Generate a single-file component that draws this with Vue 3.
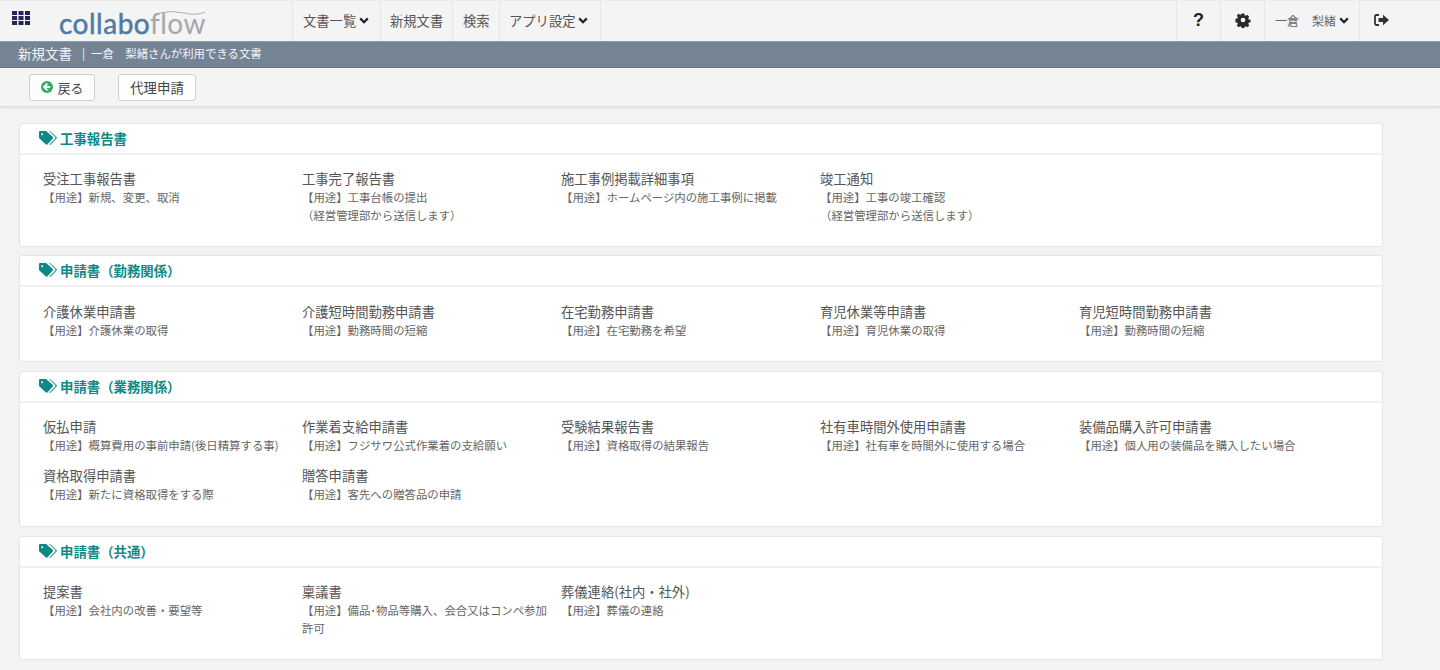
<script setup>
const sections = [
  { title: '工事報告書', height: 'h124', items: [
    { t: '受注工事報告書', d: ['【用途】新規、変更、取消'] },
    { t: '工事完了報告書', d: ['【用途】工事台帳の提出', '（経営管理部から送信します）'] },
    { t: '施工事例掲載詳細事項', d: ['【用途】ホームページ内の施工事例に掲載'] },
    { t: '竣工通知', d: ['【用途】工事の竣工確認', '（経営管理部から送信します）'] },
  ] },
  { title: '申請書（勤務関係）', height: 'h107', items: [
    { t: '介護休業申請書', d: ['【用途】介護休業の取得'] },
    { t: '介護短時間勤務申請書', d: ['【用途】勤務時間の短縮'] },
    { t: '在宅勤務申請書', d: ['【用途】在宅勤務を希望'] },
    { t: '育児休業等申請書', d: ['【用途】育児休業の取得'] },
    { t: '育児短時間勤務申請書', d: ['【用途】勤務時間の短縮'] },
  ] },
  { title: '申請書（業務関係）', height: 'h156', items: [
    { t: '仮払申請', d: ['【用途】概算費用の事前申請(後日精算する事)'] },
    { t: '作業着支給申請書', d: ['【用途】フジサワ公式作業着の支給願い'] },
    { t: '受験結果報告書', d: ['【用途】資格取得の結果報告'] },
    { t: '社有車時間外使用申請書', d: ['【用途】社有車を時間外に使用する場合'] },
    { t: '装備品購入許可申請書', d: ['【用途】個人用の装備品を購入したい場合'] },
    { t: '資格取得申請書', d: ['【用途】新たに資格取得をする際'] },
    { t: '贈答申請書', d: ['【用途】客先への贈答品の申請'] },
  ] },
  { title: '申請書（共通）', height: 'h124', items: [
    { t: '提案書', d: ['【用途】会社内の改善・要望等'] },
    { t: '稟議書', d: ['【用途】備品･物品等購入、会合又はコンペ参加', '許可'] },
    { t: '葬儀連絡(社内・社外)', d: ['【用途】葬儀の連絡'] },
  ] },
]
</script>

<template>
  <div class="page">
    <header class="topbar">
      <div class="brand">
        <svg class="apps" width="18" height="14" viewBox="0 0 18 14">
          <g fill="#23235f">
            <rect x="0" y="0" width="5" height="4" /><rect x="6.500" y="0" width="5" height="4" /><rect x="13" y="0" width="5" height="4" />
            <rect x="0" y="5" width="5" height="4" /><rect x="6.500" y="5" width="5" height="4" /><rect x="13" y="5" width="5" height="4" />
            <rect x="0" y="10" width="5" height="4" /><rect x="6.500" y="10" width="5" height="4" /><rect x="13" y="10" width="5" height="4" />
          </g>
        </svg>
        <div class="logo">
          <span class="logo-a">collabo</span><span class="logo-b">flow</span>
          <svg class="swoosh" width="48" height="6" viewBox="0 0 48 6"><path d="M1 3 Q14 0 26 3 T47 2" fill="none" stroke="#aab0b3" stroke-width="1" /></svg>
        </div>
      </div>
      <nav class="nav">
        <a class="nav-item w88">文書一覧<svg class="chev" viewBox="0 0 10 7"><path d="M1.200 1.400 5 5.200 8.800 1.400" /></svg></a>
        <a class="nav-item w72">新規文書</a>
        <a class="nav-item w47">検索</a>
        <a class="nav-item w101">アプリ設定<svg class="chev" viewBox="0 0 10 7"><path d="M1.200 1.400 5 5.200 8.800 1.400" /></svg></a>
      </nav>
      <div class="right">
        <a class="r-item help">?</a>
        <a class="r-item gear">
          <svg width="16" height="16" viewBox="0 0 16 16">
            <path fill="#2b2b2b" fill-rule="evenodd" d="M6.600.800h2.800l.4 2 1.300.6 1.800-1.100 2 2-1.100 1.800.6 1.300 2 .4v2.800l-2 .4-.6 1.300 1.100 1.800-2 2-1.800-1.100-1.300.6-.4 2H6.600l-.4-2-1.300-.6-1.800 1.100-2-2 1.100-1.800-.6-1.300-2-.4V6.600l2-.4.6-1.300-1.100-1.800 2-2 1.800 1.100 1.300-.6zM8 5.400a2.600 2.600 0 1 0 0 5.200 2.600 2.600 0 0 0 0-5.200z" transform="translate(.8 .8) scale(.9)" />
          </svg>
        </a>
        <a class="r-item user">一倉<span class="given">梨緒</span><svg class="chev" viewBox="0 0 10 7"><path d="M1.200 1.400 5 5.200 8.800 1.400" /></svg></a>
        <a class="r-item logout">
          <svg width="16" height="12" viewBox="0 0 16 12">
            <path fill="none" stroke="#333" stroke-width="1.800" d="M5 1H2.400C1.600 1 1 1.600 1 2.400v7.200c0 .8.6 1.400 1.400 1.400H5" />
            <path fill="#333" d="M4.500 4H9V.8L15 6l-6 5.200V8H4.500z" />
          </svg>
        </a>
      </div>
    </header>

    <div class="subbar">
      <span class="sub-title">新規文書</span>
      <span class="sub-sep">|</span>
      <span class="sub-info">一倉　梨緒さんが利用できる文書</span>
    </div>

    <div class="toolbar">
      <button class="btn back">
        <svg width="12" height="12" viewBox="0 0 12 12">
          <circle cx="6" cy="6" r="6" fill="#2fae60" />
          <path d="M6.400 2.600 3 6l3.400 3.400M3.400 6h5.800" fill="none" stroke="#fff" stroke-width="1.900" />
        </svg>
        <span>戻る</span>
      </button>
      <button class="btn proxy">代理申請</button>
    </div>

    <main class="content">
      <section v-for="s in sections" :key="s.title" class="card" :class="s.height">
        <h2 class="card-head">
          <svg class="tag" width="18" height="14" viewBox="0 0 18 14">
            <path fill="#0e8a85" fill-rule="evenodd" d="M0 1.200C0 .5.5 0 1.200 0h5.500c.4 0 .7.1 1 .4l5.900 5.400c.6.600.6 1.400 0 2l-5 5.400c-.6.600-1.400.6-2 0L.4 7.600C.1 7.300 0 7 0 6.600zM3.200 2.200a1 1 0 1 0 0 2 1 1 0 0 0 0-2z" />
            <path fill="#57a9a5" d="M10 0h.8c.4 0 .7.1 1 .4l5.800 5.400c.5.5.5 1.400 0 1.900l-5.500 5.900c-.5.5-1.300.5-1.800 0l-.2-.2 5.800-5.900c.4-.4.4-1 0-1.400z" />
          </svg>
          {{ s.title }}
        </h2>
        <div class="grid">
          <div v-for="item in s.items" :key="item.t" class="doc">
            <div class="doc-title">{{ item.t }}</div>
            <div v-for="line in item.d" :key="line" class="doc-desc">{{ line }}</div>
          </div>
        </div>
      </section>
    </main>
  </div>
</template>

<style>
html, body { margin: 0; background: #f3f3f3; }
</style>

<style scoped>
.page {
  width: 1440px;
  height: 670px;
  overflow: hidden;
  background: #f3f3f3;
  color: #555;
  font-family: "Noto Sans CJK JP", "Liberation Sans", sans-serif;
}
.topbar {
  height: 40px;
  display: flex;
  align-items: stretch;
  background: #f4f4f4;
  border-top: 1px solid #ececec;
}
.brand {
  width: 292px;
  display: flex;
  align-items: center;
  flex: none;
}
.apps { margin: 0 0 7px 12px; flex: none; }
.logo {
  position: relative;
  margin: 4px 0 0 29px;
  font-family: "Lato", "Liberation Sans", sans-serif;
  font-size: 28px;
  line-height: 32px;
  letter-spacing: .5px;
}
.logo-a { color: #4f7ba3; -webkit-text-stroke: .5px #4f7ba3; }
.logo-b { color: #a3a8ab; }
.swoosh { position: absolute; right: 0; top: 3px; }
.nav { display: flex; border-left: 1px solid #e6e6e6; }
.nav-item {
  display: flex;
  align-items: center;
  box-sizing: border-box;
  padding: 0 0 2px 10px;
  border-right: 1px solid #e6e6e6;
  font-size: 13.300px;
  color: #555;
  white-space: nowrap;
}
.w88 { width: 88px; }
.w72 { width: 72px; padding-left: 9px; }
.w47 { width: 47px; }
.w101 { width: 101px; padding-left: 9px; }
.chev {
  width: 10px;
  height: 7px;
  margin-left: 3px;
  fill: none;
  stroke: #222;
  stroke-width: 2.200;
}
.right { margin: 0 36px 0 auto; display: flex; border-left: 1px solid #e6e6e6; }
.r-item {
  display: flex;
  align-items: center;
  justify-content: center;
  box-sizing: border-box;
  padding-bottom: 2px;
  border-right: 1px solid #e6e6e6;
}
.help { width: 44px; font: 700 18px "Liberation Sans", sans-serif; color: #222; }
.gear { width: 44px; }
.user { width: 95px; font-size: 12px; color: #666; }
.given { margin-left: 13px; }
.logout { width: 44px; border-right: 0; }
.subbar {
  height: 27px;
  display: flex;
  align-items: center;
  box-sizing: border-box;
  padding: 0 0 4px 18px;
  background: #748494;
  border-top: 1px solid #8d9aa6;
  border-bottom: 1px solid #66757f;
  color: #f2f4f6;
  font-size: 11.400px;
}
.sub-title { font-size: 13.500px; }
.sub-sep { margin: 0 6px 0 10px; }
.toolbar {
  height: 39px;
  display: flex;
  align-items: center;
  gap: 23px;
  box-sizing: border-box;
  padding-left: 29px;
  background: #f4f4f4;
  border-bottom: 1px solid #dcdcdc;
  box-shadow: 0 1px 2px rgba(0,0,0,.08);
}
.btn {
  height: 27px;
  display: flex;
  align-items: center;
  justify-content: center;
  padding: 0;
  background: #fff;
  border: 1px solid #cfcfcf;
  border-radius: 3px;
  color: #444;
  font-family: inherit;
  font-size: 13.400px;
}
.back { width: 66px; gap: 5px; font-size: 12.800px; }
.proxy { width: 78px; }
.content {
  display: flex;
  flex-direction: column;
  gap: 9px;
  padding: 16px 0 0 19px;
}
.card {
  width: 1364px;
  box-sizing: border-box;
  background: #fff;
  border: 1px solid #e5e5e5;
  border-radius: 3px;
}
.h124 { height: 124px; }
.h107 { height: 107px; margin-top: -1px; }
.h156 { height: 156px; }
.card-head {
  height: 31px;
  margin: 0;
  display: flex;
  align-items: center;
  gap: 3px;
  box-sizing: border-box;
  padding: 0 0 2px 19px;
  border-bottom: 2px solid #f1f1f1;
  color: #0e8a85;
  font-size: 13.400px;
  font-weight: 700;
}
.grid {
  display: grid;
  grid-template-columns: repeat(5, 259px);
  grid-auto-rows: 49px;
  padding: 14px 0 0 23px;
}
.h107 .grid { padding-top: 15px; }
.doc-title {
  font-size: 13.300px;
  line-height: 20px;
  color: #555;
  white-space: nowrap;
}
.doc-desc {
  font-size: 11.400px;
  line-height: 17.500px;
  color: #666;
  white-space: nowrap;
}
</style>
